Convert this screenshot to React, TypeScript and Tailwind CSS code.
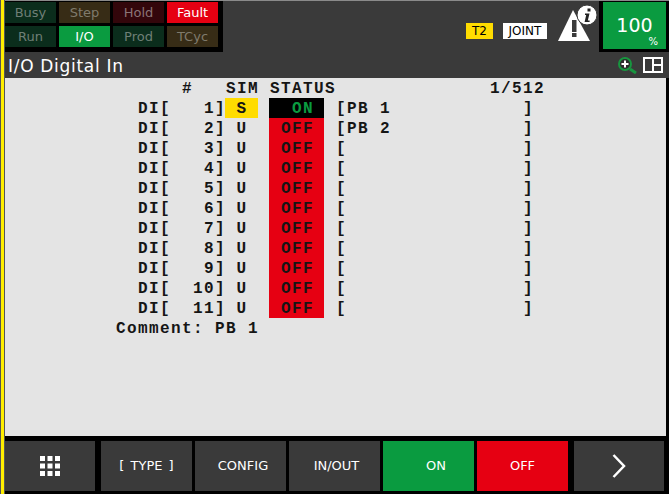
import React from "react";

const uiFont = { fontFamily: '"DejaVu Sans", sans-serif' };

const rows = [
  { n: 1, sim: "S", on: true, comment: "PB 1" },
  { n: 2, sim: "U", on: false, comment: "PB 2" },
  { n: 3, sim: "U", on: false, comment: "" },
  { n: 4, sim: "U", on: false, comment: "" },
  { n: 5, sim: "U", on: false, comment: "" },
  { n: 6, sim: "U", on: false, comment: "" },
  { n: 7, sim: "U", on: false, comment: "" },
  { n: 8, sim: "U", on: false, comment: "" },
  { n: 9, sim: "U", on: false, comment: "" },
  { n: 10, sim: "U", on: false, comment: "" },
  { n: 11, sim: "U", on: false, comment: "" },
];

function Lamp({ label, className }: { label: string; className: string }) {
  return (
    <div
      className={`h-[21px] flex items-center justify-center text-[13px] ${className}`}
    >
      {label}
    </div>
  );
}

function SoftKey({
  children,
  className,
}: {
  children?: React.ReactNode;
  className: string;
}) {
  return (
    <div
      className={`h-[50px] flex items-center justify-center text-white text-[13px] ${className}`}
    >
      {children}
    </div>
  );
}

function AlarmIcon() {
  return (
    <svg width="42" height="38" viewBox="0 0 42 38" className="shrink-0">
      <path d="M17 5 L34 36 L2 36 Z" fill="#fff" />
      <rect x="16" y="15" width="4.5" height="12" fill="#3a3a3a" />
      <rect x="16" y="28" width="4.5" height="4" fill="#3a3a3a" />
      <circle cx="31" cy="10" r="10" fill="#fff" stroke="#3a3a3a" strokeWidth="1" />
      <path d="M31.5 3.5 h3 v3 h-3 Z M29 8.5 h4.5 L31.8 15.5 h1.8 v1.5 h-5 L30.2 10 h-1.2 Z" fill="#222" />
    </svg>
  );
}

function ZoomIcon() {
  return (
    <svg width="20" height="17" viewBox="0 0 20 17">
      <circle cx="8" cy="7" r="6" fill="#2c2c2c" stroke="#17963f" strokeWidth="2" />
      <path d="M8 3.5 v7 M4.5 7 h7" stroke="#fff" strokeWidth="2" />
      <path d="M13 12 L19 16" stroke="#17963f" strokeWidth="3" />
    </svg>
  );
}

function SplitIcon() {
  return (
    <svg width="20" height="16" viewBox="0 0 20 16" fill="none" stroke="#fff" strokeWidth="2">
      <rect x="1" y="1" width="18" height="14" />
      <path d="M10 1 V15 M10 8 H19" />
    </svg>
  );
}

function GridIcon() {
  return (
    <svg width="20" height="20" viewBox="0 0 20 20" fill="#fff">
      {[0, 7.5, 15].map((y) =>
        [0, 7.5, 15].map((x) => (
          <rect key={`${x}-${y}`} x={x} y={y} width="5" height="5" />
        )),
      )}
    </svg>
  );
}

export default function App() {
  return (
    <div className="w-[669px] h-[494px] overflow-hidden bg-black flex" style={uiFont}>
      <div className="w-[5px] h-full flex shrink-0 bg-[#555555]">
        <div className="w-[1px]" />
        <div className="w-[3px] bg-[#ffee00]" />
      </div>
      <div className="flex-1 flex flex-col min-w-0">
        <div className="h-[52px] flex bg-[#3a3a3a] border-t border-[#8a8a8a]">
          <div className="w-[218px] h-[51px] pt-[1px] bg-black grid grid-cols-[51px_51px_51px_51px] gap-x-[3px] gap-y-[3px] content-start">
            <Lamp label="Busy" className="bg-[#0b2d1c] text-[#6f7f76]" />
            <Lamp label="Step" className="bg-[#372c16] text-[#7f7a6c]" />
            <Lamp label="Hold" className="bg-[#33060b] text-[#8a7476]" />
            <Lamp label="Fault" className="bg-[#e60012] text-white" />
            <Lamp label="Run" className="bg-[#0b2d1c] text-[#6f7f76]" />
            <Lamp label="I/O" className="bg-[#0a9b40] text-white" />
            <Lamp label="Prod" className="bg-[#0b2d1c] text-[#6f7f76]" />
            <Lamp label="TCyc" className="bg-[#372c16] text-[#7f7a6c]" />
          </div>
          <div className="flex-1 flex items-start justify-end text-[12px] pr-[1px] pt-[4px]">
            <div className="bg-[#ffdc00] text-black h-[16px] w-[27px] mt-[18px] flex items-center justify-center">
              T2
            </div>
            <div className="bg-white text-black h-[16px] w-[44px] mt-[18px] ml-[10px] mr-[9px] flex items-center justify-center">
              JOINT
            </div>
            <AlarmIcon />
          </div>
          <div className="w-[70px] h-[51px] border-l-[4px] border-r-[3px] border-t border-b-[3px] border-black bg-[#0a9b40] text-white relative flex items-center justify-center text-[19px]">
            100
            <span className="absolute right-[8px] bottom-[0px] text-[10px]">%</span>
          </div>
        </div>
        <div className="h-[26px] flex items-center justify-between bg-[#3a3a3a] text-white text-[17px] tracking-[0.7px] pl-[3px] pr-[6px]">
          <span className="pt-[3px]">I/O Digital In</span>
          <div className="flex items-center gap-[6px]">
            <ZoomIcon />
            <SplitIcon />
          </div>
        </div>
        <div className="h-[358px] mr-[3px] bg-[#e4e4e4] font-['Liberation_Mono',monospace] font-bold text-[16px] tracking-[1.4px] text-[#151515] whitespace-pre">
          <div className="h-[20px] leading-[22px] pl-[1px]">
            {"                #   SIM STATUS              1/512"}
          </div>
          {rows.map((r) => (
            <div key={r.n} className="h-[20px] leading-[22px] flex pl-[133px]">
              <span className="w-[87px]">{`DI[${String(r.n).padStart(4)}]`}</span>
              <span
                className={`w-[33px] pl-[1px] text-center ${r.sim === "S" ? "bg-[#ffdc00]" : ""}`}
              >
                {r.sim}
              </span>
              <span
                className={`w-[55px] ml-[11px] pl-[12px] ${r.on ? "bg-black text-[#0a9b40]" : "bg-[#e60012]"}`}
              >
                {r.on ? " ON" : "OFF"}
              </span>
              <span className="ml-[12px]">{`[${r.comment.padEnd(16)}]`}</span>
            </div>
          ))}
          <div className="h-[20px] leading-[22px] pl-[111px]">Comment: PB 1</div>
        </div>
        <div className="h-[5px]" />
        <div className="flex">
          <SoftKey className="w-[90px] bg-[#3a3a3a]">
            <GridIcon />
          </SoftKey>
          <SoftKey className="w-[91px] ml-[6px] bg-[#3a3a3a] [word-spacing:2px]">[ TYPE ]</SoftKey>
          <SoftKey className="w-[91px] ml-[3px] pl-[5px] bg-[#3a3a3a]">CONFIG</SoftKey>
          <SoftKey className="w-[91px] ml-[3px] pl-[4px] bg-[#3a3a3a]">IN/OUT</SoftKey>
          <SoftKey className="w-[91px] ml-[3px] pl-[15px] bg-[#0a9b40]">ON</SoftKey>
          <SoftKey className="w-[91px] ml-[3px] bg-[#e60012]">OFF</SoftKey>
          <SoftKey className="w-[90px] ml-[6px] bg-[#3a3a3a]">
            <svg width="14" height="24" viewBox="0 0 14 24" fill="none" stroke="#fff" strokeWidth="2.5">
              <path d="M1.5 1 L12 12 L1.5 23" />
            </svg>
          </SoftKey>
        </div>
      </div>
    </div>
  );
}
